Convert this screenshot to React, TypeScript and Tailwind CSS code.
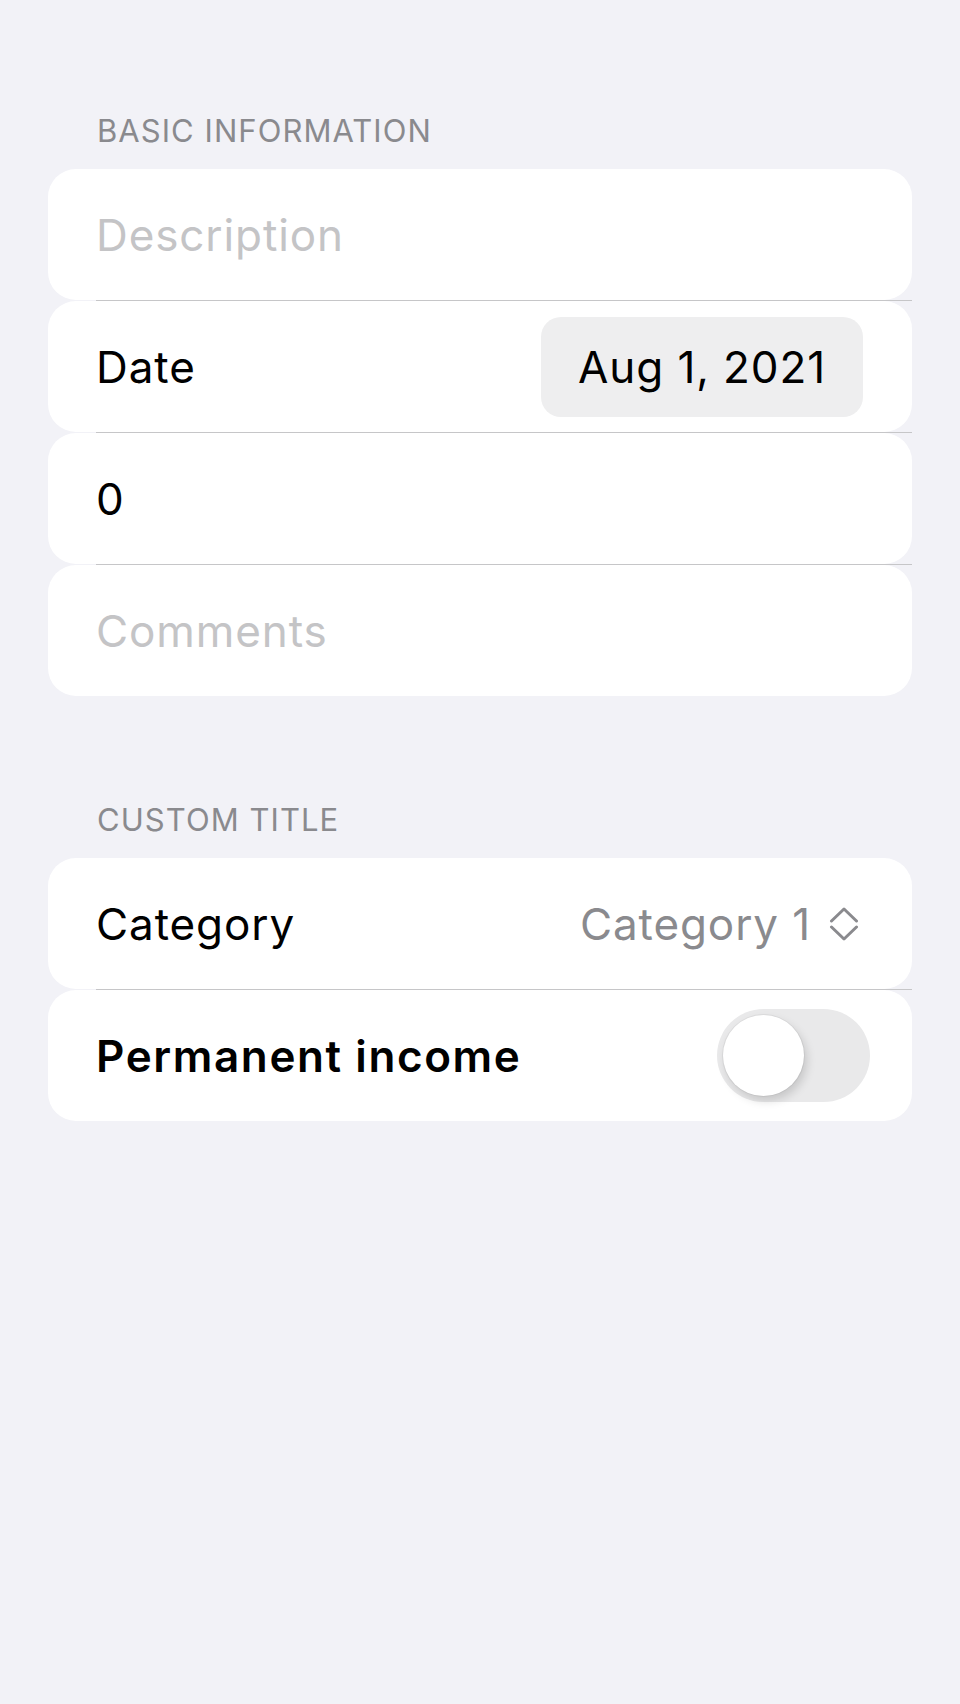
import React, { useState } from 'react';

function SectionHeader({ title }: { title: string }) {
  return (
    <div className="pl-[49px] text-[31px] leading-[31px] tracking-[1.05px] text-[#8a8a8e] mb-[23px]">
      {title}
    </div>
  );
}

function Separator() {
  return <div className="ml-[48px] h-px bg-[#c6c6c8]" />;
}

function Row({ children }: { children: React.ReactNode }) {
  return (
    <div className="flex h-[131px] items-center justify-between rounded-[28px] bg-white pl-[48px]">
      {children}
    </div>
  );
}

function UpDownChevron() {
  return (
    <svg width="30" height="34" viewBox="0 0 30 34" fill="none" stroke="#8a8a8e" strokeWidth="3" strokeLinecap="round" strokeLinejoin="round">
      <path d="M2.5 14 L15 2 L27.5 14" />
      <path d="M2.5 20 L15 32 L27.5 20" />
    </svg>
  );
}

function Toggle({ on, onChange }: { on: boolean; onChange: (v: boolean) => void }) {
  return (
    <button
      onClick={() => onChange(!on)}
      className={`relative h-[93px] w-[153px] rounded-full ${on ? 'bg-[#34c759]' : 'bg-[#e9e9ea]'}`}
    >
      <span
        className={`absolute top-[6px] h-[81px] w-[81px] rounded-full bg-white shadow-[3px_5px_10px_rgba(0,0,0,0.15),0_0_0_1px_rgba(0,0,0,0.05)] ${on ? 'left-[66px]' : 'left-[6px]'}`}
      />
    </button>
  );
}

export default function App() {
  const [permanent, setPermanent] = useState(false);

  return (
    <main
      className="min-h-[1704px] bg-[#f2f2f7] px-[48px] pt-[115px] text-[44px] tracking-[0.9px] text-black"
      style={{ fontFamily: 'Inter, "Noto Sans", sans-serif' }}
    >
      <SectionHeader title="BASIC INFORMATION" />
      <div>
        <Row>
          <span className="leading-none text-[#c4c4c6]">Description</span>
        </Row>
        <Separator />
        <Row>
          <span className="leading-none">Date</span>
          <div className="mr-[49px] flex h-[100px] w-[322px] items-center justify-center rounded-[20px] bg-[#eeeeef]">
            <span className="leading-none">Aug 1, 2021</span>
          </div>
        </Row>
        <Separator />
        <Row>
          <span className="leading-none">0</span>
        </Row>
        <Separator />
        <Row>
          <span className="leading-none text-[#c4c4c6]">Comments</span>
        </Row>
      </div>

      <div className="h-[108px]" />

      <SectionHeader title="CUSTOM TITLE" />
      <div>
        <Row>
          <span className="leading-none">Category</span>
          <div className="mr-[53px] flex items-center gap-[18px]">
            <span className="leading-none text-[#8a8a8e]">Category 1</span>
            <UpDownChevron />
          </div>
        </Row>
        <Separator />
        <Row>
          <span className="font-semibold leading-none tracking-[1.6px]">Permanent income</span>
          <div className="mr-[42px] flex items-center">
            <Toggle on={permanent} onChange={setPermanent} />
          </div>
        </Row>
      </div>
    </main>
  );
}
